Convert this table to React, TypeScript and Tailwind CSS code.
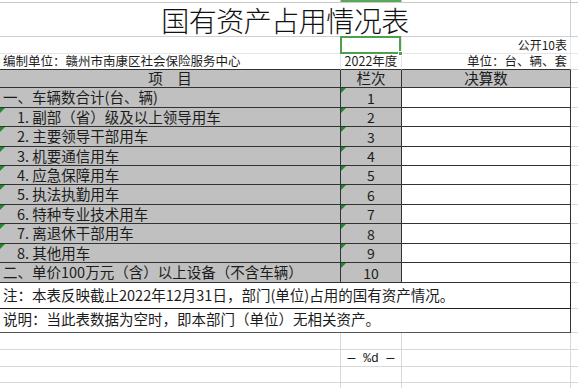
const rows = [
  { label: '一、车辆数合计(台、辆)', no: '1', indent: false, mark: false, h: 'h-[20px]' },
  { label: '1. 副部（省）级及以上领导用车', no: '2', indent: true, mark: true, h: 'h-[19px]' },
  { label: '2. 主要领导干部用车', no: '3', indent: true, mark: true, h: 'h-[20px]' },
  { label: '3. 机要通信用车', no: '4', indent: true, mark: true, h: 'h-[19px]' },
  { label: '4. 应急保障用车', no: '5', indent: true, mark: true, h: 'h-[19px]' },
  { label: '5. 执法执勤用车', no: '6', indent: true, mark: true, h: 'h-[20px]' },
  { label: '6. 特种专业技术用车', no: '7', indent: true, mark: true, h: 'h-[19px]' },
  { label: '7. 离退休干部用车', no: '8', indent: true, mark: true, h: 'h-[20px]' },
  { label: '8. 其他用车', no: '9', indent: true, mark: true, h: 'h-[19px]' },
  { label: '二、单价100万元（含）以上设备（不含车辆）', no: '10', indent: false, mark: false, h: 'h-[20px]' },
];

const Mark = () => (
  <span className="absolute left-0 top-0 h-0 w-0 border-r-[5px] border-t-[5px] border-r-transparent border-t-[#1f8a2a]" />
);

const App = () => {
  return (
    <div className="h-[388px] w-[578px] overflow-hidden bg-white font-['Noto_Sans_CJK_SC',sans-serif] text-[#1c1c1c]">
      <div className="grid grid-cols-[341px_61px_169px_7px]">
        {/* top strip */}
        <div className="h-[3px] border-b border-r border-[#c8c8c8]" />
        <div className="h-[3px] border-b border-r border-[#c8c8c8] bg-[#5aa85a]" />
        <div className="h-[3px] border-b border-r border-[#c8c8c8]" />
        <div className="h-[3px] border-b border-[#c8c8c8]" />

        {/* title */}
        <div className="col-span-3 flex h-[34px] items-center justify-center border-b border-r border-[#cfcfcf] text-[28px] font-light leading-none tracking-[-0.5px] text-[#111]">
          国有资产占用情况表
        </div>
        <div className="h-[34px] border-b border-[#cfcfcf]" />

        {/* selected cell row */}
        <div className="h-[17px] border-b border-r border-[#e6e6e6]" />
        <div className="relative h-[17px] border-b border-r border-[#e6e6e6]">
          <div className="absolute -left-[1px] -top-[1px] bottom-[-1px] right-0 z-10 border-2 border-[#4f9f4f]" />
          <div className="absolute -bottom-[3px] -right-[2px] z-10 h-[5px] w-[5px] border border-white bg-[#4f9f4f]" />
        </div>
        <div className="flex h-[17px] items-center justify-end border-b border-r border-[#e6e6e6] pr-[3px] text-[12px] leading-none">
          公开10表
        </div>
        <div className="h-[17px] border-b border-[#e6e6e6]" />

        {/* unit row */}
        <div className="flex h-[16px] items-center border-b border-r border-b-[#333] border-r-[#e6e6e6] pl-[3px] text-[12.5px] leading-none">
          编制单位：赣州市南康区社会保险服务中心
        </div>
        <div className="flex h-[16px] items-center justify-center border-b border-r border-b-[#333] border-r-[#e6e6e6] text-[12.5px] leading-none">
          2022年度
        </div>
        <div className="flex h-[16px] items-center justify-end border-b border-r border-b-[#333] border-r-[#e6e6e6] pr-[3px] text-[12.5px] leading-none">
          单位：台、辆、套
        </div>
        <div className="h-[16px] border-b border-[#d8d8d8]" />

        {/* header */}
        <div className="flex h-[18px] items-center justify-center border-b border-r border-[#333] bg-[#c0c0c0] text-[14.5px] leading-none">
          项　目
        </div>
        <div className="flex h-[18px] items-center justify-center border-b border-r border-[#333] bg-[#c0c0c0] text-[14.5px] leading-none">
          栏次
        </div>
        <div className="flex h-[18px] items-center justify-center border-b border-r border-[#333] bg-[#c0c0c0] text-[14.5px] leading-none">
          决算数
        </div>
        <div className="h-[18px] border-b border-[#d8d8d8]" />

        {/* data rows */}
        {rows.map((r) => (
          <div key={r.no} className="contents">
            <div
              className={`relative flex ${r.h} items-center whitespace-nowrap border-b border-r border-[#333] bg-[#c0c0c0] text-[14.5px] leading-none ${
                r.indent ? 'pl-[17px]' : 'pl-[3px]'
              }`}
            >
              {r.mark && <Mark />}
              {r.label}
            </div>
            <div className={`relative flex ${r.h} items-center justify-center border-b border-r border-[#333] bg-[#c0c0c0] text-[14px] leading-none`}>
              <Mark />
              {r.no}
            </div>
            <div className={`${r.h} border-b border-r border-[#333] bg-white`} />
            <div className={`${r.h} border-b border-[#d8d8d8]`} />
          </div>
        ))}

        {/* notes */}
        <div className="col-span-3 flex h-[26px] items-center border-b border-r border-[#222] pl-[3px] text-[14.5px] leading-none">
          注：本表反映截止2022年12月31日，部门(单位)占用的国有资产情况。
        </div>
        <div className="h-[26px] border-b border-[#d8d8d8]" />
        <div className="col-span-3 flex h-[24px] items-center border-b border-r border-b-[#555] border-r-[#333] pb-[3px] pl-[3px] text-[14.5px] leading-none">
          说明：当此表数据为空时，即本部门（单位）无相关资产。
        </div>
        <div className="h-[24px] border-b border-[#d8d8d8]" />

        {/* empty grid below */}
        <div className="h-[17px] border-b border-r border-[#d8d8d8]" />
        <div className="h-[17px] border-b border-r border-[#d8d8d8]" />
        <div className="h-[17px] border-b border-r border-[#d8d8d8]" />
        <div className="h-[17px] border-b border-[#d8d8d8]" />

        <div className="h-[17px] border-b border-r border-[#d8d8d8]" />
        <div className="flex h-[17px] items-center justify-center whitespace-pre border-b border-r border-[#d8d8d8] font-['Liberation_Mono',monospace] text-[13px] leading-none">
          — %d —
        </div>
        <div className="h-[17px] border-b border-r border-[#d8d8d8]" />
        <div className="h-[17px] border-b border-[#d8d8d8]" />

        <div className="h-[16px] border-b border-r border-[#d8d8d8]" />
        <div className="h-[16px] border-b border-r border-[#d8d8d8]" />
        <div className="h-[16px] border-b border-r border-[#d8d8d8]" />
        <div className="h-[16px] border-b border-[#d8d8d8]" />

        <div className="h-[8px] border-r border-[#d8d8d8]" />
        <div className="h-[8px] border-r border-[#d8d8d8]" />
        <div className="h-[8px] border-r border-[#d8d8d8]" />
        <div className="h-[8px]" />
      </div>
    </div>
  );
};

export default App;
